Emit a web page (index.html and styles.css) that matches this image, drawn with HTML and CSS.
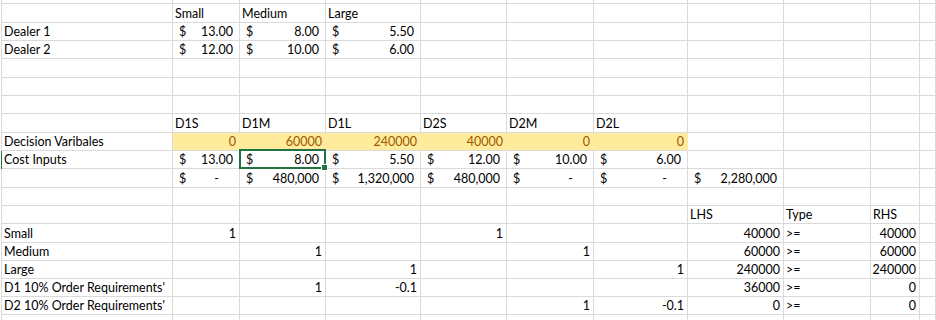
FILE: index.html
```html
<!DOCTYPE html>
<html>
<head>
<meta charset="utf-8">
<link rel="stylesheet" href="styles.css">
</head>
<body>
<div class="sheet">
  <div class="r top"><div class="c"></div><div class="c"></div><div class="c"></div><div class="c"></div><div class="c"></div><div class="c"></div><div class="c"></div><div class="c"></div><div class="c"></div><div class="c"></div><div class="c"></div></div>
  <div class="r t"><div class="c"></div><div class="c">Small</div><div class="c">Medium</div><div class="c">Large</div><div class="c"></div><div class="c"></div><div class="c"></div><div class="c"></div><div class="c"></div><div class="c"></div><div class="c"></div></div>
  <div class="r"><div class="c">Dealer 1</div><div class="c acc"><span>$</span><span>13.00</span></div><div class="c acc"><span>$</span><span>8.00</span></div><div class="c acc"><span>$</span><span>5.50</span></div><div class="c"></div><div class="c"></div><div class="c"></div><div class="c"></div><div class="c"></div><div class="c"></div><div class="c"></div></div>
  <div class="r"><div class="c">Dealer 2</div><div class="c acc"><span>$</span><span>12.00</span></div><div class="c acc"><span>$</span><span>10.00</span></div><div class="c acc"><span>$</span><span>6.00</span></div><div class="c"></div><div class="c"></div><div class="c"></div><div class="c"></div><div class="c"></div><div class="c"></div><div class="c"></div></div>
  <div class="r t"><div class="c"></div><div class="c"></div><div class="c"></div><div class="c"></div><div class="c"></div><div class="c"></div><div class="c"></div><div class="c"></div><div class="c"></div><div class="c"></div><div class="c"></div></div>
  <div class="r"><div class="c"></div><div class="c"></div><div class="c"></div><div class="c"></div><div class="c"></div><div class="c"></div><div class="c"></div><div class="c"></div><div class="c"></div><div class="c"></div><div class="c"></div></div>
  <div class="r"><div class="c"></div><div class="c"></div><div class="c"></div><div class="c"></div><div class="c"></div><div class="c"></div><div class="c"></div><div class="c"></div><div class="c"></div><div class="c"></div><div class="c"></div></div>
  <div class="r t"><div class="c"></div><div class="c">D1S</div><div class="c">D1M</div><div class="c">D1L</div><div class="c">D2S</div><div class="c">D2M</div><div class="c">D2L</div><div class="c"></div><div class="c"></div><div class="c"></div><div class="c"></div></div>
  <div class="r"><div class="c">Decision Varibales</div><div class="c num dv">0</div><div class="c num dv">60000</div><div class="c num dv">240000</div><div class="c num dv">40000</div><div class="c num dv">0</div><div class="c num dv">0</div><div class="c"></div><div class="c"></div><div class="c"></div><div class="c"></div></div>
  <div class="r active"><div class="c">Cost Inputs</div><div class="c acc"><span>$</span><span>13.00</span></div><div class="c acc sel"><span>$</span><span>8.00</span></div><div class="c acc"><span>$</span><span>5.50</span></div><div class="c acc"><span>$</span><span>12.00</span></div><div class="c acc"><span>$</span><span>10.00</span></div><div class="c acc"><span>$</span><span>6.00</span></div><div class="c"></div><div class="c"></div><div class="c"></div><div class="c"></div></div>
  <div class="r t"><div class="c"></div><div class="c acc"><span>$</span><span class="dash">-</span></div><div class="c acc"><span>$</span><span>480,000</span></div><div class="c acc"><span>$</span><span>1,320,000</span></div><div class="c acc"><span>$</span><span>480,000</span></div><div class="c acc"><span>$</span><span class="dash">-</span></div><div class="c acc"><span>$</span><span class="dash">-</span></div><div class="c acc"><span>$</span><span>2,280,000</span></div><div class="c"></div><div class="c"></div><div class="c"></div></div>
  <div class="r"><div class="c"></div><div class="c"></div><div class="c"></div><div class="c"></div><div class="c"></div><div class="c"></div><div class="c"></div><div class="c"></div><div class="c"></div><div class="c"></div><div class="c"></div></div>
  <div class="r"><div class="c"></div><div class="c"></div><div class="c"></div><div class="c"></div><div class="c"></div><div class="c"></div><div class="c"></div><div class="c">LHS</div><div class="c">Type</div><div class="c">RHS</div><div class="c"></div></div>
  <div class="r t"><div class="c">Small</div><div class="c num">1</div><div class="c"></div><div class="c"></div><div class="c num">1</div><div class="c"></div><div class="c"></div><div class="c num">40000</div><div class="c">&gt;=</div><div class="c num">40000</div><div class="c"></div></div>
  <div class="r"><div class="c">Medium</div><div class="c"></div><div class="c num">1</div><div class="c"></div><div class="c"></div><div class="c num">1</div><div class="c"></div><div class="c num">60000</div><div class="c">&gt;=</div><div class="c num">60000</div><div class="c"></div></div>
  <div class="r"><div class="c">Large</div><div class="c"></div><div class="c"></div><div class="c num">1</div><div class="c"></div><div class="c"></div><div class="c num">1</div><div class="c num">240000</div><div class="c">&gt;=</div><div class="c num">240000</div><div class="c"></div></div>
  <div class="r"><div class="c">D1 10% Order Requirements'</div><div class="c"></div><div class="c num">1</div><div class="c num">-0.1</div><div class="c"></div><div class="c"></div><div class="c"></div><div class="c num">36000</div><div class="c">&gt;=</div><div class="c num">0</div><div class="c"></div></div>
  <div class="r"><div class="c">D2 10% Order Requirements'</div><div class="c"></div><div class="c"></div><div class="c"></div><div class="c"></div><div class="c num">1</div><div class="c num">-0.1</div><div class="c num">0</div><div class="c">&gt;=</div><div class="c num">0</div><div class="c"></div></div>
  <div class="r end"><div class="c"></div><div class="c"></div><div class="c"></div><div class="c"></div><div class="c"></div><div class="c"></div><div class="c"></div><div class="c"></div><div class="c"></div><div class="c"></div><div class="c"></div></div>
</div>
</body>
</html>
```
FILE: styles.css
```css
* { box-sizing: border-box; }
body {
  margin: 0;
  background: #ffffff;
  font-family: Lato, "Liberation Sans", sans-serif;
  font-size: 12.5px;
  color: #000000;
  overflow: hidden;
}
.sheet {
  padding-left: 1px;
}
.r {
  display: grid;
  grid-template-columns: 171px 67px 86px 95px 86px 87px 94px 96px 87px 49px 1fr;
  height: 18px;
  border-left: 1px solid #d9d9d9;
}
.r.t { height: 19px; }
.r.top { height: 4px; }
.r.end { height: 20px; }
.r.active { border-left-color: #217346; }
.c {
  border-right: 1px solid #dadada;
  border-bottom: 1px solid #dadada;
  display: flex;
  align-items: flex-end;
  line-height: 16px;
  white-space: nowrap;
  padding: 0 2px;
  min-width: 0;
}
.num {
  justify-content: flex-end;
  padding-right: 3px;
}
.acc {
  justify-content: space-between;
  padding: 0 6px;
}
.dash { margin-right: 14px; }
.dv {
  background: #ffeb9c;
  color: #9c5700;
  border-right-color: #ffeb9c;
}
.sel { position: relative; }
.sel::after {
  content: "";
  position: absolute;
  top: -2px;
  left: -1px;
  right: -1px;
  bottom: -1px;
  border: 2px solid #217346;
  z-index: 2;
}
.sel::before {
  content: "";
  position: absolute;
  right: -3px;
  bottom: -3px;
  width: 5px;
  height: 5px;
  background: #217346;
  border: 1px solid #ffffff;
  z-index: 3;
}
```
